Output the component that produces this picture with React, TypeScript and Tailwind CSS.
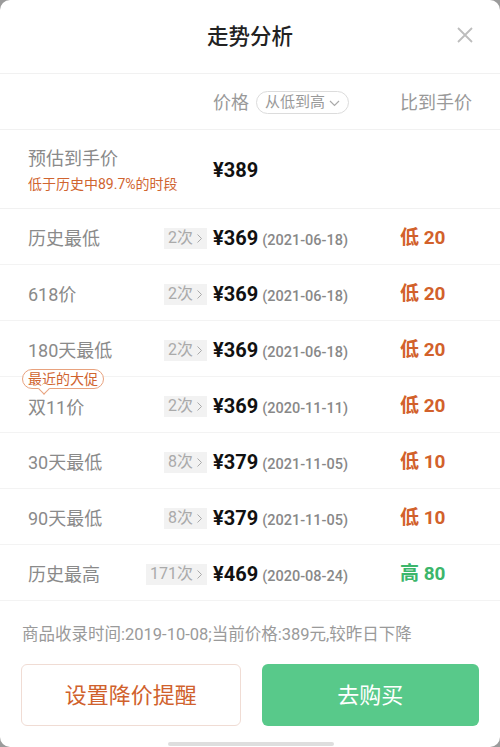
import React from 'react'

interface Row {
  label: string
  count: string
  price: string
  date: string
  diff: string
  up?: boolean
  tag?: string
}

const rows: Row[] = [
  { label: '历史最低', count: '2次', price: '¥369', date: '(2021-06-18)', diff: '低 20' },
  { label: '618价', count: '2次', price: '¥369', date: '(2021-06-18)', diff: '低 20' },
  { label: '180天最低', count: '2次', price: '¥369', date: '(2021-06-18)', diff: '低 20' },
  { label: '双11价', count: '2次', price: '¥369', date: '(2020-11-11)', diff: '低 20', tag: '最近的大促' },
  { label: '30天最低', count: '8次', price: '¥379', date: '(2021-11-05)', diff: '低 10' },
  { label: '90天最低', count: '8次', price: '¥379', date: '(2021-11-05)', diff: '低 10' },
  { label: '历史最高', count: '171次', price: '¥469', date: '(2020-08-24)', diff: '高 80', up: true },
]

const font = { fontFamily: 'Roboto, "Noto Sans CJK SC", sans-serif' }

function Chevron({ className }: { className?: string }) {
  return (
    <svg width="7" height="11" viewBox="0 0 7 11" className={className}>
      <path d="M1.5 1.5 L5.5 5.5 L1.5 9.5" fill="none" stroke="currentColor" strokeWidth="1" />
    </svg>
  )
}

export default function App() {
  return (
    <div className="w-[500px] h-[747px] bg-[#9b9b9b] overflow-hidden" style={font}>
      <div className="w-full h-full bg-white rounded-[10px] flex flex-col relative">
        <div className="h-[74px] flex items-center justify-center relative border-b border-[#f1f1f1]">
          <span className="text-[21.5px] font-medium text-[#222] mt-[1px]">走势分析</span>
          <svg width="18" height="18" viewBox="0 0 18 18" className="absolute right-[26px] top-[26px] text-[#bdbdbd]">
            <path d="M2 2 L16 16 M16 2 L2 16" stroke="currentColor" strokeWidth="1.8" />
          </svg>
        </div>

        <div className="h-[56px] flex items-center border-b border-[#f1f1f1] pt-[2px]">
          <div className="w-[213px] shrink-0" />
          <span className="text-[18px] text-[#999]">价格</span>
          <span className="ml-[7px] h-[23px] px-[8px] rounded-full border border-[#dcdcdc] flex items-center text-[15px] text-[#999]">
            从低到高
            <svg width="11" height="7" viewBox="0 0 11 7" className="ml-[4px] mt-[2px]">
              <path d="M1 1 L5.5 5.5 L10 1" fill="none" stroke="#aaa" strokeWidth="1.2" />
            </svg>
          </span>
          <span className="ml-auto mr-[28px] text-[18px] text-[#999]">比到手价</span>
        </div>

        <div className="h-[79px] flex items-center border-b border-[#f1f1f1] pt-[2px]">
          <div className="w-[213px] shrink-0 pl-[28px] flex flex-col">
            <span className="text-[18px] text-[#8a8a8a] leading-[26px]">预估到手价</span>
            <span className="text-[14px] text-[#d0642f] leading-[20px] mt-[2px]">低于历史中89.7%的时段</span>
          </div>
          <span className="text-[20px] font-bold text-[#111]">¥389</span>
        </div>

        {rows.map((r) => (
          <div key={r.label} className="h-[56px] flex items-center border-b border-[#f3f3f3] relative pt-[3px]">
            {r.tag && (
              <div className="absolute left-[22px] top-[-8px] z-10">
                <div className="relative px-[5px] h-[20px] flex items-center rounded-full border border-[#e8a27e] bg-white text-[14px] text-[#d0642f] leading-none">
                  {r.tag}
                  <div className="absolute left-[17px] bottom-[-5px] w-[8px] h-[8px] bg-white border-r border-b border-[#e8a27e] rotate-45" />
                </div>
              </div>
            )}
            <span className={`pl-[28px] text-[18px] text-[#8a8a8a] flex-1 ${r.tag ? 'mt-[3px]' : ''}`}>{r.label}</span>
            <span className="h-[21px] px-[4px] mr-[6px] bg-[#f2f2f2] flex items-center text-[16px] text-[#aaa]">
              {r.count}
              <Chevron className="ml-[3px] text-[#aaa]" />
            </span>
            <div className="w-[187px] shrink-0 flex items-baseline">
              <span className="text-[20px] font-bold text-[#111]">{r.price}</span>
              <span className="ml-[4px] text-[14.5px] font-medium text-[#888]">{r.date}</span>
            </div>
            <span className={`w-[100px] shrink-0 text-[19px] font-bold ${r.up ? 'text-[#3cb66b]' : 'text-[#d2612b]'}`}>
              {r.diff}
            </span>
          </div>
        ))}

        <div className="pl-[22px] pt-[23px] text-[16.5px] text-[#9a9a9a] leading-[22px]">
          商品收录时间:2019-10-08;当前价格:389元,较昨日下降
        </div>

        <div className="flex gap-[21px] px-[21px] mt-[18px]">
          <button className="flex-1 h-[62px] rounded-[6px] border border-[#f0dcd4] bg-white text-[22px] text-[#d0612c]">
            设置降价提醒
          </button>
          <button className="flex-1 h-[62px] rounded-[6px] bg-[#58c98a] text-[22px] text-white">
            去购买
          </button>
        </div>

        <div className="absolute bottom-[1px] left-[168px] w-[166px] h-[4px] rounded-full bg-[#dedede]" />
      </div>
    </div>
  )
}
